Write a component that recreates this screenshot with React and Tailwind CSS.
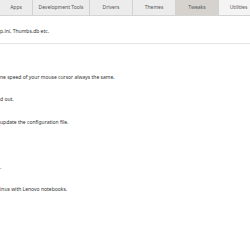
const tabs = [
  { label: 'Apps', w: 'w-[32px]' },
  { label: 'Development Tools', w: 'w-[57px]' },
  { label: 'Drivers', w: 'w-[43px]' },
  { label: 'Themes', w: 'w-[43px]' },
  { label: 'Tweaks', w: 'w-[43px]', active: true },
  { label: 'Utilities', w: 'w-[40px]' },
]

const rows = [
  'p.ini, Thumbs.db etc.',
  '',
  'ne speed of your mouse cursor always the same.',
  'd out.',
  'update the configuration file.',
  '',
  '.',
  'inus with Lenovo notebooks.',
]

export default function App() {
  return (
    <div className="w-[250px] h-[250px] overflow-hidden bg-white font-['Noto_Sans',sans-serif]">
      {/* Tab bar */}
      <div className="flex h-[16px] bg-[#ececec] border-b border-[#d4d4d4]">
        {tabs.map((t, i) => (
          <div
            key={t.label}
            className={`${t.w} shrink-0 flex items-center justify-center text-[5px] text-[#555] ${
              i > 0 ? 'border-l border-[#d2d2d2]' : ''
            } ${t.active ? 'bg-[#d6d3cf]' : ''} ${t.label === 'Utilities' ? 'bg-[#f4f4f4]' : ''}`}
          >
            {t.label}
          </div>
        ))}
      </div>

      {/* Tweak list */}
      <div className="flex flex-col pt-[5px]">
        {rows.map((r, i) => (
          <div
            key={i}
            className={`h-[22.5px] flex items-center text-[5px] text-[#333] whitespace-nowrap ${
              i === 0 ? 'border-b border-[#e6e6e6]' : ''
            }`}
          >
            {r}
          </div>
        ))}
      </div>
    </div>
  )
}
